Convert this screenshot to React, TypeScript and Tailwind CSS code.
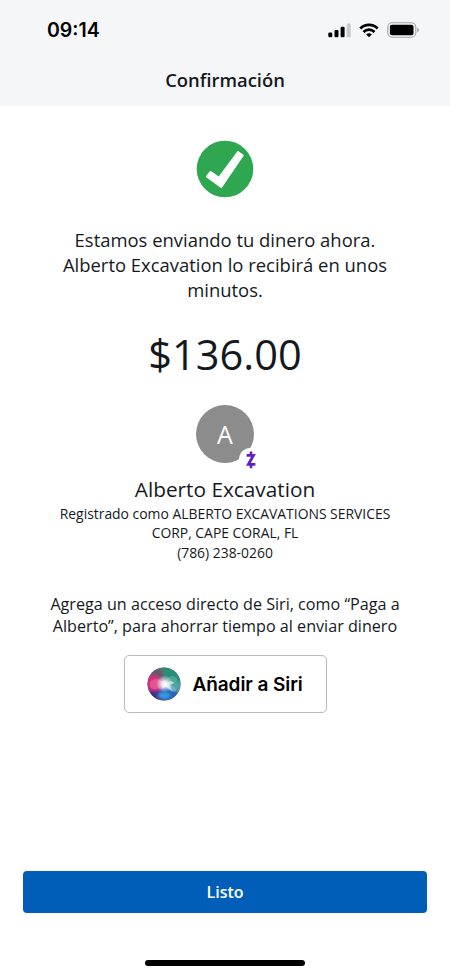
function SignalIcon() {
  return (
    <svg width="23" height="15" viewBox="0 0 23 15">
      <rect x="0.3" y="9.6" width="4" height="4.7" rx="1.2" fill="#000" />
      <rect x="6.5" y="6.9" width="4" height="7.4" rx="1.2" fill="#000" />
      <rect x="12.6" y="3.7" width="4" height="10.6" rx="1.2" fill="#000" />
      <rect x="18.7" y="0.5" width="4" height="13.8" rx="1.2" fill="#c9cacb" />
    </svg>
  );
}

function WifiIcon() {
  return (
    <svg width="20" height="15" viewBox="0 0 20 15" fill="none" stroke="#000" strokeWidth="2.7">
      <path d="M1.3 5.5 C6.1 0.7 13.9 0.7 18.7 5.5" />
      <path d="M4.5 9 C7.6 5.9 12.4 5.9 15.5 9" />
      <path d="M10 14.3 L7.2 11.4 C8.7 9.9 11.3 9.9 12.8 11.4 Z" fill="#000" stroke="none" />
    </svg>
  );
}

function BatteryIcon() {
  return (
    <svg width="33" height="16" viewBox="0 0 33 16">
      <rect x="0.8" y="0.8" width="28" height="14.4" rx="4.4" fill="none" stroke="#a2a3a5" strokeWidth="1.1" />
      <rect x="2.9" y="2.7" width="23.6" height="10.6" rx="2" fill="#000" />
      <path d="M30.2 5.6 C32.4 6.4 32.4 9.6 30.2 10.4 Z" fill="#a2a3a5" />
    </svg>
  );
}

function SuccessIcon() {
  return (
    <svg width="58" height="58" viewBox="0 0 58 58">
      <circle cx="29" cy="29" r="28.3" fill="#2ea750" />
      <path
        d="M10.2 36 L13.6 31.4 Q14.3 30.6 15.2 31.2 L22.7 36.6 L41.2 11.5 Q41.8 10.8 42.6 11.3 L47.3 14.7 Q48 15.3 47.5 16.1 L26.2 47.3 Q25.4 48.4 24.3 47.6 L10.5 37.4 Q9.6 36.8 10.2 36 Z"
        fill="#fff"
      />
    </svg>
  );
}

function ZelleIcon() {
  return (
    <svg width="10" height="18" viewBox="0 0 10 18" fill="none" stroke="#6320c4">
      <path d="M0.6 4.4 H7.4 L2.4 13.4 H9.4" strokeWidth="2.9" strokeLinejoin="miter" />
      <path d="M5 0.6 V4 M5 13.6 V17.2" strokeWidth="2.6" />
    </svg>
  );
}

function SiriIcon() {
  return (
    <svg width="34" height="34" viewBox="0 0 34 34">
      <defs>
        <clipPath id="orb">
          <circle cx="17" cy="17" r="16.2" />
        </clipPath>
        <radialGradient id="glow">
          <stop offset="0" stopColor="#fff" />
          <stop offset="0.3" stopColor="#fff" stopOpacity="0.85" />
          <stop offset="1" stopColor="#fff" stopOpacity="0" />
        </radialGradient>
        <filter id="soft" x="-30%" y="-30%" width="160%" height="160%">
          <feGaussianBlur stdDeviation="1.8" />
        </filter>
      </defs>
      <circle cx="17" cy="17" r="16.6" fill="#69586f" />
      <g clipPath="url(#orb)">
        <rect width="34" height="34" fill="#3a5c80" />
        <g filter="url(#soft)">
          <path d="M10 0 H34 V17 L24 15 L15 9 Z" fill="#279078" />
          <path d="M17 17 L34 14 V27 Z" fill="#4fa6a4" />
          <path d="M16 18 L30 25 L26 34 H8 Z" fill="#2468bf" />
          <path d="M0 24 L12 20 L16 34 H5 Z" fill="#3a3287" />
          <path d="M0 8 L11 9 L17 17 L11 24 L0 23 Z" fill="#d92f7b" />
          <path d="M3 7 Q9 0 16 3 L17 12 L9 9 Z" fill="#6f5268" />
          <ellipse cx="17" cy="28.5" rx="6" ry="3" fill="#3b9be4" />
        </g>
        <path d="M3 15 Q10 8 18 17 Q9 26 3 20 Z" fill="#ee81ae" opacity="0.45" />
        <path d="M17 17 Q23 5 30 11 Q32 17 17 17 Z" fill="#8bd2b7" opacity="0.35" />
        <path d="M17 17 Q22 27 29 24 Q30 19 17 17 Z" fill="#afdeea" opacity="0.4" />
        <circle cx="17.5" cy="16.8" r="8.5" fill="url(#glow)" />
        <path d="M17 17 L24 14 L28 16 L22 18 L26 24 L19 20 L14 22 Z" fill="#fff" opacity="0.5" />
      </g>
    </svg>
  );
}

export default function App() {
  return (
    <div className="flex h-[975px] w-[450px] flex-col overflow-hidden bg-white font-['Open_Sans',sans-serif] text-[#15191d]">
      <header className="h-[106px] shrink-0 bg-[#f5f6f8]">
        <div className="flex h-[60px] items-center justify-between pr-[30px] pl-[47px]">
          <span className="pt-px font-['Inter',sans-serif] text-[19.5px] font-semibold text-black">09:14</span>
          <div className="flex items-center gap-2">
            <SignalIcon />
            <WifiIcon />
            <BatteryIcon />
          </div>
        </div>
        <h1 className="text-center text-[18.4px] leading-10 font-semibold">Confirmación</h1>
      </header>

      <main className="flex flex-1 flex-col items-center pt-[34px] text-center">
        <SuccessIcon />
        <p className="mt-[29px] text-[18.45px] leading-[25px]">
          Estamos enviando tu dinero ahora.
          <br />
          Alberto Excavation lo recibirá en unos
          <br />
          minutos.
        </p>
        <p className="mt-[22px] text-[41.5px] leading-[60px]">$136.00</p>

        <div className="relative mt-[21px] flex size-[58px] items-center justify-center rounded-full bg-[#8c8c8c] pt-px text-[25px] text-white">
          A
          <span className="absolute top-[43px] left-[43px] flex size-[23px] items-center justify-center rounded-full bg-white">
            <ZelleIcon />
          </span>
        </div>

        <h2 className="mt-[12px] text-[20.8px] leading-7">Alberto Excavation</h2>
        <p className="mt-px text-[13.9px] leading-[19.3px]">
          Registrado como ALBERTO EXCAVATIONS SERVICES
          <br />
          CORP, CAPE CORAL, FL
          <br />
          (786) 238-0260
        </p>
        <p className="mt-[31.5px] text-[16.15px] leading-[22px]">
          Agrega un acceso directo de Siri, como “Paga a
          <br />
          Alberto”, para ahorrar tiempo al enviar dinero
        </p>

        <button className="mt-[18px] flex h-[58px] w-[203px] items-center rounded-[5px] border-[1.5px] border-[#b9babc] pl-[22px] font-['Inter',sans-serif] text-[19px] font-semibold text-black">
          <SiriIcon />
          <span className="ml-[12px] pt-0.5 tracking-[-0.08px]">Añadir a Siri</span>
        </button>
      </main>

      <footer className="flex h-[104px] shrink-0 flex-col items-center px-[23px]">
        <button className="h-[41.5px] w-full rounded-[4px] bg-[#005eb8] pt-px text-[16px] font-semibold text-white">Listo</button>
        <div className="mt-[47px] h-[6px] w-[160px] rounded-full bg-black" />
      </footer>
    </div>
  );
}
